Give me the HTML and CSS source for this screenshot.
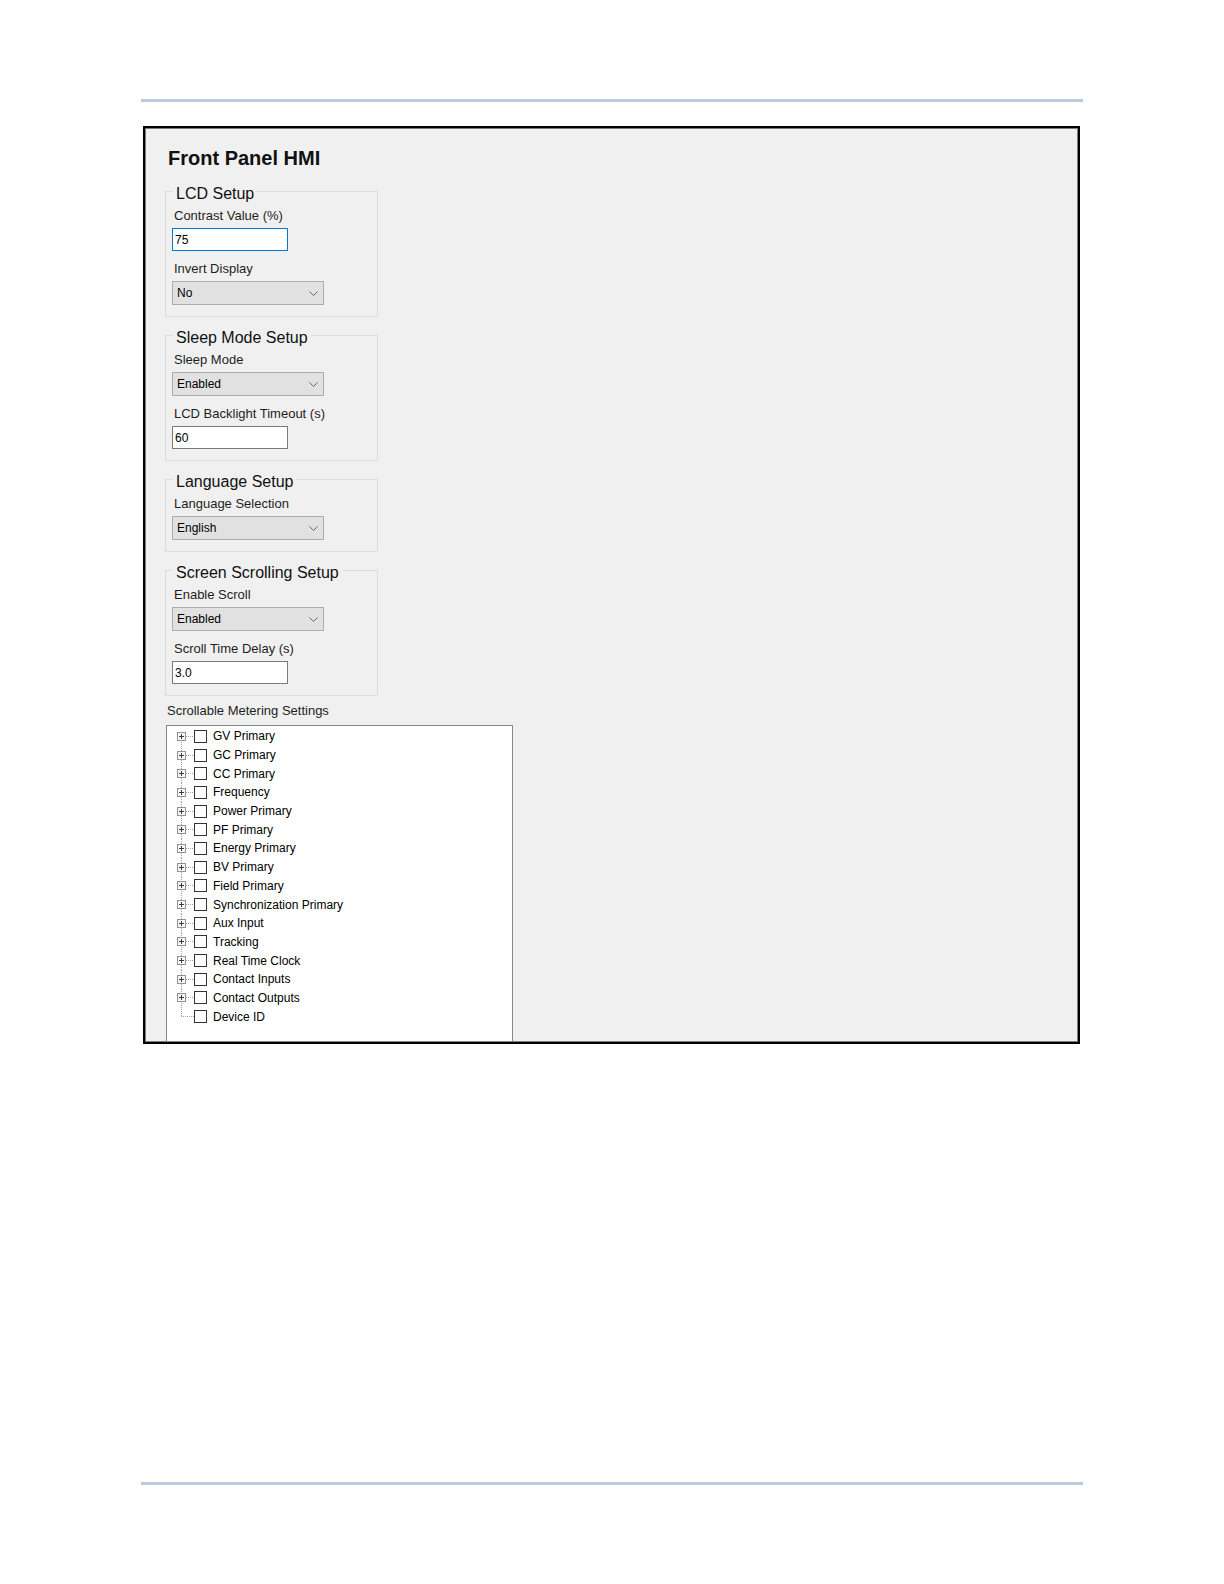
FILE: index.html
```html
<!DOCTYPE html>
<html lang="en">
<head>
<meta charset="utf-8">
<title>Front Panel HMI</title>
<link rel="stylesheet" href="styles.css">
</head>
<body>
<div class="page">
  <div class="rule"></div>
  <div class="shot">
    <div class="title">Front Panel HMI</div>

    <div class="group group-first">
      <div class="legend">LCD Setup</div>
      <div class="label label-first">Contrast Value (%)</div>
      <div class="textbox focused">75</div>
      <div class="label">Invert Display</div>
      <div class="combo"><span>No</span><svg width="9" height="5" viewBox="0 0 9 5"><path d="M0.5 0.5 L4.5 4.5 L8.5 0.5" fill="none" stroke="#666"/></svg></div>
    </div>

    <div class="group">
      <div class="legend">Sleep Mode Setup</div>
      <div class="label label-first">Sleep Mode</div>
      <div class="combo"><span>Enabled</span><svg width="9" height="5" viewBox="0 0 9 5"><path d="M0.5 0.5 L4.5 4.5 L8.5 0.5" fill="none" stroke="#666"/></svg></div>
      <div class="label">LCD Backlight Timeout (s)</div>
      <div class="textbox">60</div>
    </div>

    <div class="group">
      <div class="legend">Language Setup</div>
      <div class="label label-first">Language Selection</div>
      <div class="combo"><span>English</span><svg width="9" height="5" viewBox="0 0 9 5"><path d="M0.5 0.5 L4.5 4.5 L8.5 0.5" fill="none" stroke="#666"/></svg></div>
    </div>

    <div class="group">
      <div class="legend">Screen Scrolling Setup</div>
      <div class="label label-first">Enable Scroll</div>
      <div class="combo"><span>Enabled</span><svg width="9" height="5" viewBox="0 0 9 5"><path d="M0.5 0.5 L4.5 4.5 L8.5 0.5" fill="none" stroke="#666"/></svg></div>
      <div class="label">Scroll Time Delay (s)</div>
      <div class="textbox">3.0</div>
    </div>

    <div class="tree-label">Scrollable Metering Settings</div>
    <div class="tree">
      <div class="node first"><span class="gutter"><svg class="exp" width="9" height="9" viewBox="0 0 9 9"><rect x="0.5" y="0.5" width="8" height="8" fill="#f6f6f6" stroke="#929292"/><path d="M2 4.5h5M4.5 2v5" stroke="#2f3d57"/></svg></span><span class="cb"></span><span class="txt">GV Primary</span></div>
      <div class="node"><span class="gutter"><svg class="exp" width="9" height="9" viewBox="0 0 9 9"><rect x="0.5" y="0.5" width="8" height="8" fill="#f6f6f6" stroke="#929292"/><path d="M2 4.5h5M4.5 2v5" stroke="#2f3d57"/></svg></span><span class="cb"></span><span class="txt">GC Primary</span></div>
      <div class="node"><span class="gutter"><svg class="exp" width="9" height="9" viewBox="0 0 9 9"><rect x="0.5" y="0.5" width="8" height="8" fill="#f6f6f6" stroke="#929292"/><path d="M2 4.5h5M4.5 2v5" stroke="#2f3d57"/></svg></span><span class="cb"></span><span class="txt">CC Primary</span></div>
      <div class="node"><span class="gutter"><svg class="exp" width="9" height="9" viewBox="0 0 9 9"><rect x="0.5" y="0.5" width="8" height="8" fill="#f6f6f6" stroke="#929292"/><path d="M2 4.5h5M4.5 2v5" stroke="#2f3d57"/></svg></span><span class="cb"></span><span class="txt">Frequency</span></div>
      <div class="node"><span class="gutter"><svg class="exp" width="9" height="9" viewBox="0 0 9 9"><rect x="0.5" y="0.5" width="8" height="8" fill="#f6f6f6" stroke="#929292"/><path d="M2 4.5h5M4.5 2v5" stroke="#2f3d57"/></svg></span><span class="cb"></span><span class="txt">Power Primary</span></div>
      <div class="node"><span class="gutter"><svg class="exp" width="9" height="9" viewBox="0 0 9 9"><rect x="0.5" y="0.5" width="8" height="8" fill="#f6f6f6" stroke="#929292"/><path d="M2 4.5h5M4.5 2v5" stroke="#2f3d57"/></svg></span><span class="cb"></span><span class="txt">PF Primary</span></div>
      <div class="node"><span class="gutter"><svg class="exp" width="9" height="9" viewBox="0 0 9 9"><rect x="0.5" y="0.5" width="8" height="8" fill="#f6f6f6" stroke="#929292"/><path d="M2 4.5h5M4.5 2v5" stroke="#2f3d57"/></svg></span><span class="cb"></span><span class="txt">Energy Primary</span></div>
      <div class="node"><span class="gutter"><svg class="exp" width="9" height="9" viewBox="0 0 9 9"><rect x="0.5" y="0.5" width="8" height="8" fill="#f6f6f6" stroke="#929292"/><path d="M2 4.5h5M4.5 2v5" stroke="#2f3d57"/></svg></span><span class="cb"></span><span class="txt">BV Primary</span></div>
      <div class="node"><span class="gutter"><svg class="exp" width="9" height="9" viewBox="0 0 9 9"><rect x="0.5" y="0.5" width="8" height="8" fill="#f6f6f6" stroke="#929292"/><path d="M2 4.5h5M4.5 2v5" stroke="#2f3d57"/></svg></span><span class="cb"></span><span class="txt">Field Primary</span></div>
      <div class="node"><span class="gutter"><svg class="exp" width="9" height="9" viewBox="0 0 9 9"><rect x="0.5" y="0.5" width="8" height="8" fill="#f6f6f6" stroke="#929292"/><path d="M2 4.5h5M4.5 2v5" stroke="#2f3d57"/></svg></span><span class="cb"></span><span class="txt">Synchronization Primary</span></div>
      <div class="node"><span class="gutter"><svg class="exp" width="9" height="9" viewBox="0 0 9 9"><rect x="0.5" y="0.5" width="8" height="8" fill="#f6f6f6" stroke="#929292"/><path d="M2 4.5h5M4.5 2v5" stroke="#2f3d57"/></svg></span><span class="cb"></span><span class="txt">Aux Input</span></div>
      <div class="node"><span class="gutter"><svg class="exp" width="9" height="9" viewBox="0 0 9 9"><rect x="0.5" y="0.5" width="8" height="8" fill="#f6f6f6" stroke="#929292"/><path d="M2 4.5h5M4.5 2v5" stroke="#2f3d57"/></svg></span><span class="cb"></span><span class="txt">Tracking</span></div>
      <div class="node"><span class="gutter"><svg class="exp" width="9" height="9" viewBox="0 0 9 9"><rect x="0.5" y="0.5" width="8" height="8" fill="#f6f6f6" stroke="#929292"/><path d="M2 4.5h5M4.5 2v5" stroke="#2f3d57"/></svg></span><span class="cb"></span><span class="txt">Real Time Clock</span></div>
      <div class="node"><span class="gutter"><svg class="exp" width="9" height="9" viewBox="0 0 9 9"><rect x="0.5" y="0.5" width="8" height="8" fill="#f6f6f6" stroke="#929292"/><path d="M2 4.5h5M4.5 2v5" stroke="#2f3d57"/></svg></span><span class="cb"></span><span class="txt">Contact Inputs</span></div>
      <div class="node"><span class="gutter"><svg class="exp" width="9" height="9" viewBox="0 0 9 9"><rect x="0.5" y="0.5" width="8" height="8" fill="#f6f6f6" stroke="#929292"/><path d="M2 4.5h5M4.5 2v5" stroke="#2f3d57"/></svg></span><span class="cb"></span><span class="txt">Contact Outputs</span></div>
      <div class="node last"><span class="gutter"></span><span class="cb"></span><span class="txt">Device ID</span></div>
    </div>
  </div>
  <div class="rule rule-bottom"></div>
</div>
</body>
</html>
```

FILE: styles.css
```css
html, body {
  margin: 0;
  padding: 0;
  background: #ffffff;
}

body {
  font-family: "Liberation Sans", Arial, sans-serif;
  color: #000;
}

.page {
  padding-top: 99px;
  margin-left: 141px;
  width: 942px;
}

.rule {
  height: 3px;
  background: #bccbdd;
}

.rule-bottom {
  margin-top: 438px;
}

.shot {
  margin-top: 24px;
  margin-left: 2px;
  width: 937px;
  height: 918px;
  box-sizing: border-box;
  border: 2px solid #000;
  box-shadow: inset 0 0 0 1px #7a7a7a;
  background: #f0f0f0;
  display: flex;
  flex-direction: column;
  overflow: hidden;
}

.title {
  margin: 18px 0 0 23px;
  font-size: 20px;
  line-height: 24px;
  font-weight: bold;
  color: #111;
}

.group {
  margin-top: 18px;
  margin-left: 20px;
  width: 213px;
  box-sizing: border-box;
  border: 1px solid #dcdcdc;
  padding: 0 6px 11px 6px;
  flex: none;
}

.group-first {
  margin-top: 21px;
}

.legend {
  width: fit-content;
  margin-top: -7.5px;
  margin-left: 1px;
  padding: 0 3px;
  background: #f0f0f0;
  font-size: 16px;
  line-height: 18px;
  color: #111;
}

.label {
  margin-top: 10px;
  margin-left: 2px;
  font-size: 13px;
  line-height: 15px;
  color: #1e1e1e;
}

.label-first {
  margin-top: 5.5px;
}

.textbox {
  margin-top: 5px;
  width: 116px;
  height: 23px;
  box-sizing: border-box;
  border: 1px solid #7a7a7a;
  background: #fff;
  padding-left: 2px;
  display: flex;
  align-items: center;
  font-size: 12px;
  color: #000;
}

.textbox.focused {
  border-color: #0078d7;
}

.combo {
  margin-top: 5px;
  width: 152px;
  height: 24px;
  box-sizing: border-box;
  border: 1px solid #adadad;
  background: #e1e1e1;
  padding: 0 5px 0 4px;
  display: flex;
  align-items: center;
  justify-content: space-between;
  font-size: 12px;
  color: #000;
}

.combo svg {
  display: block;
}

.tree-label {
  margin-top: 7px;
  margin-left: 22px;
  font-size: 13px;
  line-height: 15px;
  color: #1e1e1e;
}

.tree {
  margin-top: 7px;
  margin-left: 21px;
  width: 347px;
  box-sizing: border-box;
  flex: 1;
  border: 1px solid #828790;
  background: #fff;
  padding-top: 1px;
}

.node {
  height: 18.7px;
  display: flex;
  align-items: center;
}

.gutter {
  align-self: stretch;
  width: 27px;
  flex: none;
  display: flex;
  align-items: center;
  background-image:
    repeating-linear-gradient(to bottom, #a0a0a0 0 1px, transparent 1px 2px),
    repeating-linear-gradient(to right, #a0a0a0 0 1px, transparent 1px 2px);
  background-repeat: no-repeat;
  background-position: 14px 0, 19px 50%;
  background-size: 1px 100%, 8px 1px;
}

.node.first .gutter {
  background-position: 14px 100%, 19px 50%;
  background-size: 1px 50%, 8px 1px;
}

.node.last .gutter {
  background-position: 14px 0, 14px 50%;
  background-size: 1px 50%, 13px 1px;
}

.exp {
  display: block;
  margin-left: 10px;
}

.cb {
  width: 13px;
  height: 13px;
  box-sizing: border-box;
  border: 1px solid #333;
  background: #fff;
  flex: none;
}

.txt {
  margin-left: 6px;
  font-size: 12px;
  color: #000;
  white-space: nowrap;
}
```
